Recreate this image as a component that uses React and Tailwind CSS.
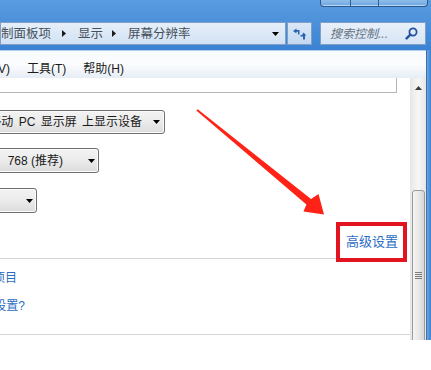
import React from "react";

function DownTri({ color = "#000" }) {
  return (
    <svg width="7" height="4" viewBox="0 0 7 4" className="shrink-0">
      <path d="M0 0H7L3.5 4Z" fill={color} />
    </svg>
  );
}

function RightTri() {
  return (
    <svg width="4" height="7" viewBox="0 0 4 7" className="shrink-0">
      <path d="M0 0L4 3.5L0 7Z" fill="#1b1b1b" />
    </svg>
  );
}

export default function App() {
  return (
    <div className="relative w-[431px] h-[370px] overflow-hidden bg-white font-['Liberation_Sans','Noto_Sans_CJK_SC',sans-serif] text-[12px] leading-[16px] text-[#1a1a1a]">
      {/* Aero header */}
      <header className="h-[50px] flex flex-col bg-gradient-to-b from-[#5a9ce0] via-[#4a8fd9] to-[#3a83d2]">
        <div className="h-[8px] flex justify-end pr-[3px]">
          <div className="flex w-[108px] h-[7px] border border-t-0 border-[#29598f] rounded-b-[4px] overflow-hidden bg-gradient-to-b from-[#8fbdea] to-[#6aa4df] shadow-[inset_0_-1px_0_#b9d6f3]">
            <div className="w-[30px] border-r border-[#2d5f99]" />
            <div className="w-[28px] border-r border-[#2d5f99]" />
            <div className="flex-1" />
          </div>
        </div>
        <div className="mt-[14px] h-[23px] flex">
          <div className="flex-1 flex items-center overflow-hidden border border-[#7f9fc8] bg-gradient-to-b from-[#e6eff9] to-[#d2e2f4] text-[12.5px] text-[#46505b]">
            <span className="w-[100px] ml-[-50px] text-right shrink-0 whitespace-nowrap">控制面板项</span>
            <span className="ml-[11px] flex"><RightTri /></span>
            <span className="ml-[12px] whitespace-nowrap">显示</span>
            <span className="ml-[9px] flex"><RightTri /></span>
            <span className="ml-[12px] whitespace-nowrap">屏幕分辨率</span>
            <span className="ml-auto mr-[6px] flex"><DownTri /></span>
          </div>
          <div className="w-[25px] ml-[1px] flex items-center justify-center border border-[#7f9fc8] bg-gradient-to-b from-[#dbe8f6] to-[#c3d8f0]">
            <svg width="14" height="12" viewBox="0 0 14 12">
              <path d="M0 3L3.5 0.5V2H6.5V6.5H5V3.8H3.5V5.5Z" fill="#2a62b2" />
              <path d="M10.5 4.5L13.5 7.5H12V11.5H10V8.5H7.5V7H9Z" fill="#2a62b2" />
            </svg>
          </div>
          <div className="ml-[8px] w-[106px] mr-[5px] flex items-center border border-[#7f9fc8] bg-gradient-to-b from-[#e8f0fa] to-[#d6e5f5]">
            <span className="pl-[9px] italic text-[12px] text-[#66717e] whitespace-nowrap">搜索控制...</span>
            <svg width="13" height="13" viewBox="0 0 13 13" className="ml-auto mr-[7px]">
              <circle cx="8" cy="5" r="3.6" fill="none" stroke="#2453a0" strokeWidth="1.8" />
              <path d="M5.4 7.6L1.6 11.4" stroke="#2453a0" strokeWidth="2.4" strokeLinecap="round" />
            </svg>
          </div>
        </div>
      </header>

      {/* Body */}
      <div className="flex h-[290px]">
        <div className="flex-1 flex flex-col">
          {/* Menu bar */}
          <div className="h-[28px] shrink-0 flex items-center gap-[17px] pt-[8px] bg-gradient-to-b from-[#f7fafd] via-[#fbfcfe] to-[#e6edf5] border-t border-[#b3cdea]">
            <span className="w-[60px] ml-[-50px] text-right shrink-0 whitespace-nowrap">查看(V)</span>
            <span className="whitespace-nowrap">工具(T)</span>
            <span className="whitespace-nowrap">帮助(H)</span>
          </div>

          <div className="flex-1 flex overflow-hidden">
            {/* Content */}
            <div className="flex-1 flex flex-col">
              <div className="h-[15px] w-[397px] shrink-0 border-b border-r border-[#b7b7b7]" />

              <div className="mt-[17px] h-[24px] ml-[-100px] w-[265px] shrink-0 flex items-center rounded-[3px] border border-[#707070] bg-gradient-to-b from-[#f3f3f3] via-[#ebebeb] to-[#dcdcdc] shadow-[inset_0_0_0_1px_#fbfbfb]">
                <span className="flex-1 text-right whitespace-nowrap [word-spacing:2px]">移动 PC 显示屏 上显示设备</span>
                <span className="w-[22px] flex justify-end pr-[4px]"><DownTri /></span>
              </div>

              <div className="mt-[14px] h-[25px] ml-[-100px] w-[199px] shrink-0 flex items-center rounded-[3px] border border-[#707070] bg-gradient-to-b from-[#f3f3f3] via-[#ebebeb] to-[#dcdcdc] shadow-[inset_0_0_0_1px_#fbfbfb]">
                <span className="flex-1 flex justify-end whitespace-nowrap">
                  <span>1366 ×</span>
                  <span className="ml-[10px]">768 (推荐)</span>
                </span>
                <span className="w-[35px] flex justify-end pr-[3px]"><DownTri /></span>
              </div>

              <div className="mt-[15px] h-[25px] ml-[-100px] w-[137px] shrink-0 flex items-center justify-end pr-[3px] rounded-[3px] border border-[#707070] bg-gradient-to-b from-[#f3f3f3] via-[#ebebeb] to-[#dcdcdc] shadow-[inset_0_0_0_1px_#fbfbfb]">
                <DownTri />
              </div>

              <div className="mt-[21px] h-[16px] shrink-0 flex justify-end pr-[12px]">
                <span className="relative text-[13px] leading-[16px] text-[#2d6dc4] whitespace-nowrap">
                  高级设置
                  <span className="absolute -left-[10px] -right-[9px] -top-[12px] -bottom-[12px] border-4 border-[#e2141f]" />
                </span>
              </div>

              <div className="mt-[8px] w-[340px] shrink-0 border-t border-[#d4d4d4]" />

              <div className="mt-[11px] ml-[-200px] w-[217px] shrink-0 text-right whitespace-nowrap text-[#2d6dc4]">放大或缩小文本和其他项目</div>
              <div className="mt-[12px] ml-[-200px] w-[225px] shrink-0 text-right whitespace-nowrap text-[#2d6dc4]">我应该选择什么显示器设置?</div>

              <div className="mt-[20px] shrink-0 border-t border-[#d4d4d4]" />
            </div>

            {/* Scrollbar */}
            <div className="w-[16px] flex flex-col items-stretch overflow-hidden border-l border-[#e6e6e6] bg-gradient-to-r from-[#e9e9e9] via-[#f6f6f6] to-[#e6e6e6]">
              <div className="h-[20px] shrink-0 flex items-center justify-center">
                <svg width="7" height="4" viewBox="0 0 7 4">
                  <path d="M0 4H7L3.5 0Z" fill="#3a3a3a" />
                </svg>
              </div>
              <div className="mt-[92px] h-[170px] shrink-0 mx-[1px] flex items-center justify-center rounded-[3px] border border-[#9a9a9a] bg-gradient-to-r from-[#f5f5f5] via-[#e9e9e9] to-[#d6d6d6]">
                <div className="flex flex-col gap-[1px]">
                  <div className="w-[7px] h-[1px] bg-[#7d7d7d]" />
                  <div className="w-[7px] h-[1px] bg-[#7d7d7d]" />
                  <div className="w-[7px] h-[1px] bg-[#7d7d7d]" />
                  <div className="w-[7px] h-[1px] bg-[#7d7d7d]" />
                </div>
              </div>
            </div>
          </div>
        </div>
        {/* Window right frame */}
        <div className="w-[5px] border-l border-[#3f6fa6] bg-gradient-to-r from-[#6aa8e6] via-[#4e93dc] to-[#3a82d1]" />
      </div>

      {/* Annotation arrow */}
      <svg className="absolute left-0 top-0 pointer-events-none" width="431" height="370" viewBox="0 0 431 370">
        <polygon
          points="196.3,110.6 306.4,204.6 303.5,211.5 324,214.5 318.5,194 311,199 197.7,109.2"
          fill="#ff2217"
        />
      </svg>
    </div>
  );
}
